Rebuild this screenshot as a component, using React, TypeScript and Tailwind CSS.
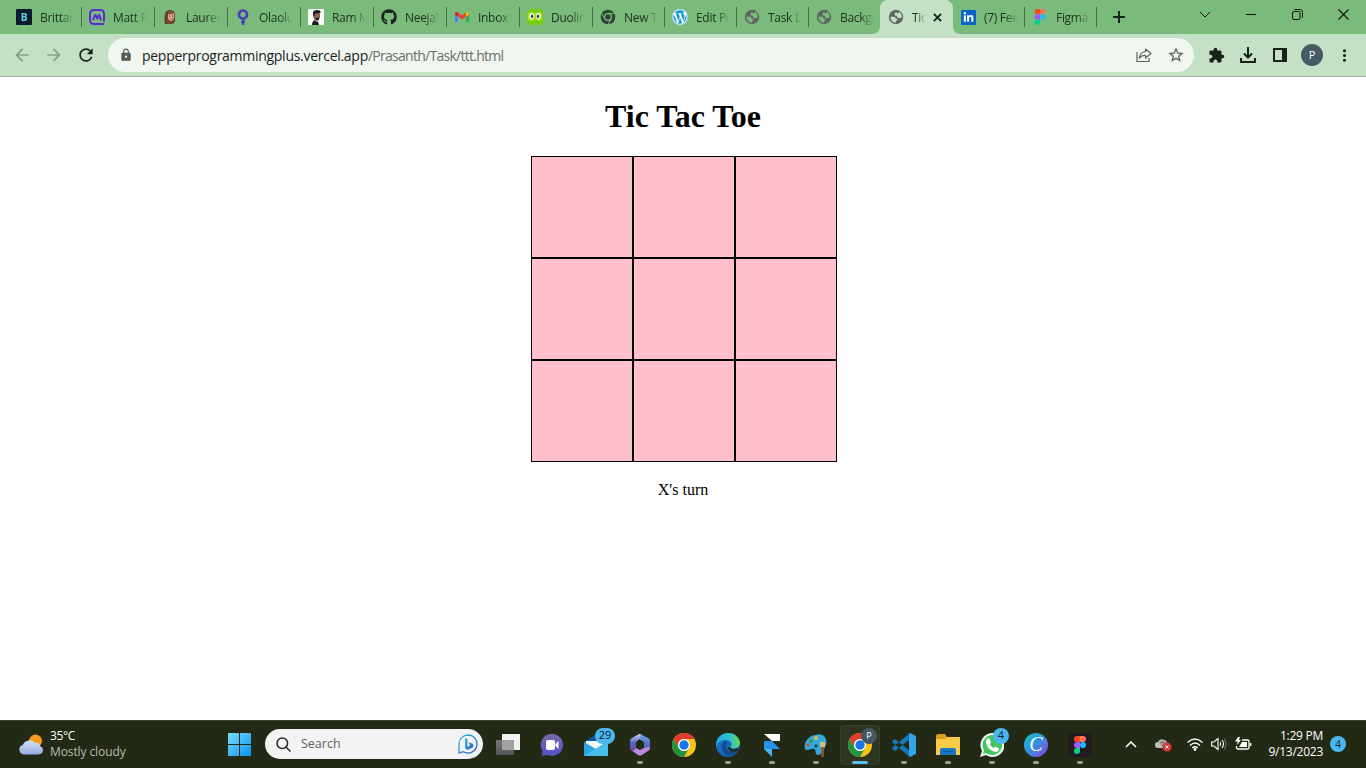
import React from "react";
import { FaGithub, FaWordpress, FaLinkedinIn } from "react-icons/fa";
import { MdExtension, MdLock, MdStarBorder, MdArrowBack, MdArrowForward, MdRefresh, MdMoreVert } from "react-icons/md";

const FigmaMark = ({ className }: { className: string }) => (
  <svg viewBox="0 0 20 30" className={className}>
    <path d="M10 0H5a5 5 0 0 0 0 10h5z" fill="#f24e1e" />
    <path d="M10 0h5a5 5 0 0 1 0 10h-5z" fill="#ff7262" />
    <path d="M10 10H5a5 5 0 0 0 0 10h5z" fill="#a259ff" />
    <circle cx="15" cy="15" r="5" fill="#1abcfe" />
    <path d="M10 20H5a5 5 0 1 0 5 5z" fill="#0acf83" />
  </svg>
);

const ChromeMark = ({ className }: { className: string }) => (
  <svg viewBox="0 0 48 48" className={className}>
    <circle cx="24" cy="24" r="24" fill="#fbc116" />
    <path d="M3.2 12A24 24 0 0 1 44.8 12H24A12 12 0 0 0 13.6 30Z" fill="#e33b2e" />
    <path d="M3.2 12A24 24 0 0 0 24 48L34.4 30A12 12 0 0 1 13.6 30Z" fill="#229342" />
    <circle cx="24" cy="24" r="12" fill="#fff" />
    <circle cx="24" cy="24" r="9.4" fill="#1a73e8" />
  </svg>
);

const Globe = ({ land }: { land: string }) => (
  <svg viewBox="0 0 16 16" className="size-4">
    <circle cx="8" cy="8" r="7.2" fill="#5f6462" />
    <path d="M8.200 3Q6.300 4 6.600 5.700q.4 1.200 2 .9l.7 1.600q1 1.300 2.700.7l1.700-.2Q14 4.500 11 2.700l-.3 1.200-1.500.6z" fill={land} />
    <path d="M2.300 7.800h3.900q1.500.3 1.500 1.900h1.600q.7 1.800-1.200 2.200l-.2 1.800Q3 13.600 2.300 7.800z" fill={land} />
  </svg>
);

type TabData = { title: string; icon: React.ReactNode; active?: boolean; noLine?: boolean; wide?: boolean };

const tabs: TabData[] = [
  {
    title: "Brittany",
    wide: true,
    icon: <span className="flex size-4 items-center justify-center rounded-[1px] bg-[#0b1b2e] text-[10px] font-bold text-[#62d2dc]">B</span>,
  },
  {
    title: "Matt Fa",
    wide: true,
    icon: (
      <svg viewBox="0 0 16 16" className="size-4" fill="none" stroke="#5b28d6" strokeWidth="1.9" strokeLinecap="round">
        <path d="M15 12V4.5Q15 1 11 1H5Q1 1 1 5v6q0 4 4 4h9.500" />
        <path d="M4 10.6C5 10.4 5 6 6.4 6s.5 3.6 1.5 3.6S8.700 6 10 6s.5 4.500 2 4.500" />
      </svg>
    ),
  },
  {
    title: "Lauren",
    wide: true,
    icon: (
      <svg viewBox="0 0 16 16" className="size-4">
        <path d="M3 15C2 9 2 1 8 1c6 0 5 6 5 10 0 3-2 4-4 4z" fill="#633b2c" />
        <ellipse cx="9" cy="7.300" rx="3.200" ry="4.700" fill="#dfa98b" />
        <path d="M4 9v5l4 1 3-2-4-1zM5 5q4 1 7-1L9 2z" fill="#7a4936" />
        <path d="M7 7h1m2 0h1" stroke="#28201f" />
        <path d="M8 10h3" stroke="#b84e48" />
      </svg>
    ),
  },
  {
    title: "Olaolu",
    wide: true,
    icon: (
      <svg viewBox="0 0 16 16" className="size-4" fill="none" stroke="#473ebd">
        <circle cx="8" cy="5.500" r="4" strokeWidth="2.700" />
        <path d="M8 9v7" strokeWidth="2.200" />
        <path d="M6 13h4" strokeWidth="1.800" />
      </svg>
    ),
  },
  {
    title: "Ram Mah",
    wide: true,
    icon: (
      <svg viewBox="0 0 16 16" className="size-4">
        <path fill="#f8f8f8" d="M0 0h16v16H0z" />
        <path d="M5 3q1-2 4-1.500Q12 2 12 5v3q-1 3-3 3l-1 1-2-2-1-3z" fill="#8d5d4d" />
        <path d="M5 6V3q1-2 4-2 4 0 3.500 3L11 4 7 4.500 6.500 7zM4 16q0-4 3-5l1 1.500h2l1 3.500zM7.500 9l4-.5-1 3H8.500z" fill="#1c1d25" />
      </svg>
    ),
  },
  { title: "NeejaVa", wide: true, icon: <FaGithub className="size-4 text-[#1b2420]" /> },
  {
    title: "Inbox (",
    wide: true,
    icon: (
      <svg viewBox="0 0 16 16" className="size-4">
        <path d="M1 4v9h3V7z" fill="#4285f4" />
        <path d="M12 7v6h3V4z" fill="#34a853" />
        <path d="M4 3.500v4L8 10.500l4-3v-4L8 6.500z" fill="#ea4335" />
        <path d="M1 4.500Q1 2 4 3.500v4L1 5.500z" fill="#c5221f" />
        <path d="M15 4.500Q15 2 12 3.500v4l3-2z" fill="#fbbc04" />
      </svg>
    ),
  },
  {
    title: "Duoling",
    wide: true,
    icon: (
      <svg viewBox="0 0 16 16" className="size-4">
        <rect width="16" height="16" rx="3.500" fill="#75cc13" />
        <path d="M1 6q0-3 3.500-3L8 4.500 11.500 3Q15 3 15 6v3q0 3-3.500 3L8 10l-3.500 2Q1 12 1 9z" fill="#a4e829" />
        <ellipse cx="4.700" cy="7.300" rx="2.300" ry="3" fill="#fff" />
        <ellipse cx="11.300" cy="7.300" rx="2.300" ry="3" fill="#fff" />
        <ellipse cx="5" cy="7.300" rx="1.300" ry="1.900" fill="#43464d" />
        <ellipse cx="11" cy="7.300" rx="1.300" ry="1.900" fill="#43464d" />
        <path d="M6.500 9h3L8 11.500z" fill="#f9aa24" />
      </svg>
    ),
  },
  {
    title: "New Ta",
    icon: (
      <svg viewBox="0 0 48 48" className="size-4">
        <circle cx="24" cy="24" r="22" fill="#2d4535" />
        <path d="M24 13h20M14.500 29.500 4.500 12M33.500 29.500 23.500 47" stroke="#7aba7b" strokeWidth="3" />
        <circle cx="24" cy="24" r="10" fill="#2d4535" stroke="#7aba7b" strokeWidth="4" />
      </svg>
    ),
  },
  {
    title: "Edit Po",
    icon: (
      <span className="flex size-4 items-center justify-center rounded-full bg-white">
        <FaWordpress className="size-4 text-[#159bd5]" />
      </span>
    ),
  },
  { title: "Task Li", icon: <Globe land="#7aba7b" /> },
  { title: "Backgr", icon: <Globe land="#7aba7b" />, noLine: true },
  { title: "Tic", icon: <Globe land="#c4e0c5" />, active: true, noLine: true },
  {
    title: "(7) Fee",
    icon: (
      <span className="flex size-[15px] items-center justify-center rounded-[1px] bg-[#0a66c2]">
        <FaLinkedinIn className="size-[11px] text-white" />
      </span>
    ),
  },
  { title: "Figma", icon: <FigmaMark className="h-4 w-4" /> },
];

function Tab({ tab }: { tab: TabData }) {
  return (
    <div
      className={
        "relative flex h-[34px] shrink-0 items-center pl-2 " +
        (tab.wide ? "w-[73px] " : "w-[72px] ") +
        (tab.active ? "rounded-t-lg bg-[#c4e0c5] shadow-[1px_0_0_#c4e0c5]" : "")
      }
    >
      <span className="flex size-4 shrink-0 items-center justify-center">{tab.icon}</span>
      <span
        className={
          "ml-2 overflow-hidden pt-px text-[12px] leading-4 tracking-[-0.3px] whitespace-nowrap text-[#1d3020] " +
          (tab.active
            ? "w-[14px] [mask-image:linear-gradient(to_right,black_30%,transparent)]"
            : "w-[34px] [mask-image:linear-gradient(to_right,black_60%,transparent)]")
        }
      >
        {tab.title}
      </span>
      {tab.active && (
        <>
          <svg viewBox="0 0 10 10" className="ml-[7px] size-[9px] shrink-0" stroke="#142017" strokeWidth="2">
            <path d="M1 1l8 8M9 1L1 9" />
          </svg>
          <svg viewBox="0 0 8 8" className="absolute bottom-0 -left-2 size-2"><path d="M8 0v8H0q8 0 8-8" fill="#c4e0c5" /></svg>
          <svg viewBox="0 0 8 8" className="absolute -right-[9px] bottom-0 size-2"><path d="M0 0v8h8Q0 8 0 0" fill="#c4e0c5" /></svg>
        </>
      )}
      {!tab.noLine && <span className="absolute top-[7px] -right-px h-5 w-px bg-[#466f49]" />}
    </div>
  );
}

function TabStrip() {
  return (
    <div className="flex h-[34px] bg-[#7aba7b] pl-2">
      {tabs.map((t) => <Tab key={t.title} tab={t} />)}
      <div className="flex w-[46px] items-center justify-center">
        <svg viewBox="0 0 12 12" className="size-3" stroke="#17251a" strokeWidth="2"><path d="M6 0v12M0 6h12" /></svg>
      </div>
      <div className="ml-auto flex h-[28px] items-center">
        <div className="flex w-[46px] justify-center">
          <svg viewBox="0 0 12 7" className="h-[7px] w-3" fill="none" stroke="#111"><path d="M1 1l5 5 5-5" /></svg>
        </div>
        <div className="flex w-[46px] justify-center"><span className="h-px w-[10px] bg-[#111]" /></div>
        <div className="flex w-[46px] justify-center">
          <svg viewBox="0 0 11 11" className="size-[11px]" fill="none" stroke="#111">
            <rect x=".5" y="2.500" width="7.500" height="8" rx="1.500" />
            <path d="M2.500 .5h5q3 0 3 3v5" />
          </svg>
        </div>
        <div className="flex w-[46px] justify-center">
          <svg viewBox="0 0 11 11" className="size-[11px]" stroke="#111" strokeWidth="1.100"><path d="M.5 .5l10 10M10.500 .5l-10 10" /></svg>
        </div>
      </div>
    </div>
  );
}

function Toolbar() {
  return (
    <div className="flex h-[43px] items-center border-b border-[#a5b5a6] bg-[#c4e0c5] text-[#18211a]">
      <div className="flex w-[108px] items-center gap-3 pl-3">
        <MdArrowBack className="size-5 text-[#84a086]" />
        <MdArrowForward className="size-5 text-[#84a086]" />
        <MdRefresh className="size-5" />
      </div>
      <div className="flex h-[34px] w-[1086px] items-center rounded-full bg-[#f0f7f0] pl-[11px]">
        <MdLock className="size-[14px] text-[#535b55]" />
        <span className="ml-[9px] w-[362px] pt-px text-[14px] leading-5 tracking-[-0.28px] whitespace-nowrap text-[#1b241d]">
          pepperprogrammingplus.vercel.app<span className="tracking-[-0.73px] text-[#68716a]">/Prasanth/Task/ttt.html</span>
        </span>
        <svg viewBox="0 0 16 16" className="ml-auto size-4" fill="none" stroke="#59625b" strokeWidth="1.200">
          <path d="M1 5v9.500h12V11" />
          <path d="M9.500 2l5.500 4.500L9.500 11V8.500Q6 8 3.500 11 4 5 9.500 4.500z" strokeLinejoin="round" />
        </svg>
        <MdStarBorder className="mr-[9px] ml-[15px] size-[18px] text-[#4f5851]" />
      </div>
      <div className="flex items-center pl-[14px]">
        <MdExtension className="size-[17px]" />
        <svg viewBox="0 0 16 16" className="ml-[15px] size-4" fill="none" stroke="currentColor" strokeWidth="2">
          <path d="M8 0v10M4 6.500l4 4 4-4M1 11v4h14v-4" />
        </svg>
        <svg viewBox="0 0 14 14" className="ml-[17px] size-[14px]">
          <path d="M1 1h12v12H1z" fill="none" stroke="currentColor" strokeWidth="2" />
          <path d="M9 1h4v12H9z" fill="currentColor" />
        </svg>
        <span className="ml-[14px] flex size-[22px] items-center justify-center rounded-full bg-[#455a64] text-[11px] text-white">P</span>
        <MdMoreVert className="ml-3 size-[19px]" />
      </div>
    </div>
  );
}

function Board() {
  return (
    <main className="flex flex-1 flex-col items-center bg-white font-['Liberation_Serif',serif] text-black">
      <h1 className="mt-[21px] text-[32px] leading-[37px] font-bold">Tic Tac Toe</h1>
      <div className="mt-[21px] ml-[2px] grid w-[306px] grid-cols-3">
        {Array.from({ length: 9 }, (_, i) => (
          <button key={i} className="size-[102px] border border-black bg-[#ffc0cb]" />
        ))}
      </div>
      <p className="mt-[19px] text-[16px] leading-[18px]">X's turn</p>
    </main>
  );
}

type TaskbarApp = { name: string; icon: React.ReactNode; running?: boolean; active?: boolean };

const apps: TaskbarApp[] = [
  {
    name: "tasks",
    icon: (
      <svg viewBox="0 0 24 24" className="size-6">
        <defs><linearGradient id="tv" x2="0" y2="1"><stop stopColor="#777" /><stop offset="1" stopColor="#555" /></linearGradient></defs>
        <path d="M6 1h18v16H6z" fill="#f2f2f2" />
        <path d="M0 7h18v15H0z" fill="url(#tv)" />
        <path d="M6 7h12v10H6z" fill="#a2a2a2" />
      </svg>
    ),
  },
  {
    name: "chat",
    icon: (
      <svg viewBox="0 0 24 24" className="size-6">
        <defs><linearGradient id="ch" x2="0" y2="1"><stop stopColor="#7b67a9" /><stop offset="1" stopColor="#5153c9" /></linearGradient></defs>
        <path d="M12.500 1a11 11 0 1 1-5 21L1.500 23l1-5A11 11 0 0 1 12.500 1" fill="url(#ch)" />
        <rect x="6" y="7" width="9" height="10" rx="2" fill="#fff" />
        <path d="M15.500 11l3-3v8l-3-3z" fill="#fff" />
      </svg>
    ),
  },
  {
    name: "mail",
    icon: (
      <span className="relative flex">
        <svg viewBox="0 0 24 24" className="size-6">
          <path d="M0 9l12-8 12 8v14H0z" fill="#0b5797" />
          <path d="M2 8h20v9H2z" fill="#f4f8fa" />
          <path d="M0 9l12 7L24 8v15H0z" fill="#2ba4df" />
          <path d="M0 23l24-15v15z" fill="#48bde9" />
        </svg>
        <span className="absolute -top-[5px] left-[11px] flex h-4 w-5 items-center justify-center rounded-full bg-[#4cb7ef] text-[11px] text-[#10202b]">29</span>
      </span>
    ),
  },
  {
    name: "office",
    running: true,
    icon: (
      <svg viewBox="0 0 24 24" className="size-6">
        <defs>
          <linearGradient id="m1" x2="0" y2="1"><stop stopColor="#c3d2ef" /><stop offset=".5" stopColor="#5664bd" /><stop offset="1" stopColor="#7441a0" /></linearGradient>
          <linearGradient id="m2" x2="0" y2="1"><stop stopColor="#69a9e8" /><stop offset="1" stopColor="#4e48a4" /></linearGradient>
        </defs>
        <path d="M13 1Q15 2 14 4L8 9v6l-1 4-3-1q-2-1-2-3V8q0-2 2-3l7-4z" fill="url(#m1)" />
        <path d="M12 1l8 4q2 1 2 3v7l-2 3-4-3V9l-5-3q2-2 1-5z" fill="url(#m2)" />
        <path d="M3 17q3 2 5-2l4 2 4-2q6-2 6 0 0 2-2 3l-6 4q-2 1-4 0z" fill="#bd87df" />
      </svg>
    ),
  },
  { name: "chrome", icon: <ChromeMark className="size-6" /> },
  {
    name: "edge",
    running: true,
    icon: (
      <svg viewBox="0 0 24 24" className="size-6">
        <defs>
          <linearGradient id="e1"><stop stopColor="#1eabe5" /><stop offset=".55" stopColor="#30bdd0" /><stop offset="1" stopColor="#67d957" /></linearGradient>
          <linearGradient id="e2" x2="1" y2="1"><stop stopColor="#1c79d5" /><stop offset="1" stopColor="#0e59ad" /></linearGradient>
        </defs>
        <circle cx="12" cy="12" r="12" fill="url(#e2)" />
        <path d="M0 11C1 4 6 0 12 0c7 0 12 5 12 10 0 4-4 6-8 5-2 0-2-1-1-2 2-3-1-6-5-6C5 7 1 9 0 14z" fill="url(#e1)" />
        <path d="M9 8C5 10 5 18 10 22c5 2 9-.5 12-4-6 2-12 0-12-5 0-2 1-3 2-4z" fill="#154b87" />
        <path d="M14 14c1 3 5 3 9 1l-1 3c-5 2-10 0-10-4z" fill="#222914" />
      </svg>
    ),
  },
  {
    name: "framer",
    running: true,
    icon: (
      <svg viewBox="0 0 24 24" className="size-6">
        <path d="M4 1h16v7h-8z" fill="#fff" />
        <path d="M4 8h8l8 8H4z" fill="#2692e8" />
        <path d="M4 16h8v8z" fill="#44b8f7" />
      </svg>
    ),
  },
  {
    name: "paint",
    running: true,
    icon: (
      <svg viewBox="0 0 24 24" className="size-6">
        <path d="M11 2C20-1 25 7 21 14c-2 5-4 8-7 8-4-1-1-5-4-6-4-1-7 3-9 0C-1 9 5 3 11 2" fill="#31a9df" />
        <circle cx="7" cy="8" r="2" fill="#3d9c4d" /><circle cx="12" cy="5" r="2" fill="#e7b63f" />
        <circle cx="4" cy="12" r="1.700" fill="#d84e3f" /><circle cx="12" cy="13" r="1.700" fill="#18465b" />
        <path d="M16 9h5v5h-5z" fill="#dfba79" /><path d="M17 14h3l-.3 10h-2z" fill="#9a582e" />
      </svg>
    ),
  },
  {
    name: "chrome-profile",
    active: true,
    icon: (
      <span className="relative flex">
        <ChromeMark className="size-6" />
        <span className="absolute -top-[5px] left-[13px] flex size-4 items-center justify-center rounded-full bg-[#455763] text-[9px] text-white">P</span>
      </span>
    ),
  },
  {
    name: "code",
    running: true,
    icon: (
      <svg viewBox="0 0 24 24" className="size-6">
        <path d="M0 8l3-2 15 12v6L1 10zM0 16l3 2L18 6V0L1 14z" fill="#1678b9" />
        <path d="M18 0l6 3v18l-6 3-1-1V1z" fill="#34a2ed" />
      </svg>
    ),
  },
  {
    name: "files",
    running: true,
    icon: (
      <svg viewBox="0 0 24 24" className="size-6">
        <path d="M0 3q0-2 2-2h7l2 3h11q2 0 2 2v2H0z" fill="#d99c20" />
        <path d="M0 6h9l2-2h13v18H0z" fill="#fbcb48" />
        <path d="M4 22v-5q0-2 2-2h12q2 0 2 2v5z" fill="#1878c4" />
        <path d="M7 18h10v1H7z" fill="#0e5698" />
      </svg>
    ),
  },
  {
    name: "whatsapp",
    running: true,
    icon: (
      <span className="relative flex">
        <svg viewBox="0 0 24 24" className="size-6">
          <path d="M12 0a12 12 0 1 1-6 22L0 24l2-6A12 12 0 0 1 12 0" fill="#f4faf4" />
          <path d="M12 2a10 10 0 1 1-6 18l-3 1 1-4A10 10 0 0 1 12 2" fill="#43c65b" />
          <path d="M7 6l2-1 2 4-1 2q1 3 4 4l1.500-1.500 3.500 2q0 3-3 3.500Q8 18 6 10q-.5-3 1-4" fill="#fff" />
        </svg>
        <span className="absolute -top-[5px] left-[13px] flex size-4 items-center justify-center rounded-full bg-[#4cb7ef] text-[11px] text-[#10202b]">4</span>
      </span>
    ),
  },
  {
    name: "canva",
    running: true,
    icon: (
      <span className="flex size-6 items-center justify-center rounded-full bg-linear-to-br from-[#0bc5cc] via-[#318cdc] to-[#7d2ae8] pb-px font-['Liberation_Serif',serif] text-[20px] leading-none text-white italic">C</span>
    ),
  },
  {
    name: "figma",
    running: true,
    icon: <span className="flex size-6 items-center justify-center rounded-[4px] bg-[#211c21]"><FigmaMark className="h-[18px] w-3" /></span>,
  },
];

function Taskbar() {
  return (
    <footer className="flex h-12 items-center border-t border-[#383e2b] bg-[#222914] text-white">
      <div className="flex w-[218px] items-center pl-[18px]">
        <svg viewBox="0 0 26 22" className="h-[22px] w-[26px]">
          <defs><linearGradient id="cl" x2="0" y2="1"><stop stopColor="#d4dffa" /><stop offset="1" stopColor="#94aee2" /></linearGradient></defs>
          <circle cx="17.500" cy="7" r="6.500" fill="#f69b20" />
          <path d="M6 20.500a5 5 0 0 1-1-9.800A7 7 0 0 1 17 9q4-1 5 3 3 1 3 4 0 4-5 4.500z" fill="url(#cl)" />
        </svg>
        <div className="ml-[6px] pb-0.5 text-[12px] leading-4 tracking-[-0.1px]">
          <div className="tracking-[-0.4px]">35°C</div>
          <div className="whitespace-nowrap text-[#b9bcb2]">Mostly cloudy</div>
        </div>
      </div>
      <div className="flex w-[47px] pl-[10px]">
        <svg viewBox="0 0 23 23" className="size-[23px]">
          <defs><linearGradient id="win" x2="1" y2="1"><stop stopColor="#7adcfc" /><stop offset="1" stopColor="#0a91ee" /></linearGradient></defs>
          <path d="M0 0h11v11H0zM12 0h11v11H12zM0 12h11v11H0zM12 12h11v11H12z" fill="url(#win)" />
        </svg>
      </div>
      <div className="-mt-px flex h-[30px] w-[218px] items-center rounded-full bg-[#f2f3f2] pr-[5px] pl-[11px]">
        <svg viewBox="0 0 15 15" className="size-[15px]" fill="none" stroke="#24272b" strokeWidth="1.500"><circle cx="6.300" cy="6.300" r="5.300" /><path d="M10 10l4.500 4.500" /></svg>
        <span className="ml-[10px] text-[12.5px] text-[#5f6260]">Search</span>
        <svg viewBox="0 0 20 20" className="ml-auto size-5">
          <defs><linearGradient id="bi" x2="1" y2="1"><stop stopColor="#38bbdf" /><stop offset="1" stopColor="#2556c4" /></linearGradient></defs>
          <path d="M10 1a9 9 0 1 1-4.500 16.800L1 19V10a9 9 0 0 1 9-9" fill="none" stroke="url(#bi)" strokeWidth="1.300" />
          <path d="M7 4l2.500 1v8l2.500-1.500-1.500-3.500 4.500 2q1 2-.5 3.500L9.500 16 7 14z" fill="url(#bi)" />
        </svg>
      </div>
      <div className="ml-[3px] flex">
        {apps.map((a) => (
          <div key={a.name} className="flex h-[46px] w-11 items-center justify-center">
            <div className={"relative flex size-10 items-center justify-center rounded-[4px] " + (a.active ? "bg-[#2e3521] ring-1 ring-[#3a402d] ring-inset" : "")}>
              {a.icon}
              {a.running && <span className="absolute bottom-px h-[3px] w-1.5 rounded-full bg-[#9b9f94]" />}
              {a.active && <span className="absolute bottom-px h-[3px] w-4 rounded-full bg-[#5bbdf0]" />}
            </div>
          </div>
        ))}
      </div>
      <div className="-mt-px flex flex-1 items-center pl-[23px]">
        <svg viewBox="0 0 12 7" className="h-[7px] w-3" fill="none" stroke="#fff" strokeWidth="1.500"><path d="M1 6l5-5 5 5" /></svg>
        <svg viewBox="0 0 17 15" className="ml-[18px] h-[15px] w-[17px]">
          <path d="M3 11Q0 11 0 8q0-3 3-3 2-4 6-2 3 0 3 4v4z" fill="#c2c2bc" /><path d="M4 5q5-4 8 2v4H8z" fill="#8b8d86" />
          <circle cx="12" cy="10" r="4.500" fill="#d6363c" /><path d="M10.500 8.500l3 3m0-3l-3 3" stroke="#fff" />
        </svg>
        <svg viewBox="0 0 16 13" className="ml-[15px] h-[13px] w-4" fill="none" stroke="#fff" strokeWidth="1.300">
          <path d="M.5 4.500q7.500-7 15 0M3 7.500q5-5 10 0M5.300 10q2.700-2.500 5.400 0" /><circle cx="8" cy="11.500" r=".8" fill="#fff" />
        </svg>
        <svg viewBox="0 0 16 14" className="ml-2 h-[14px] w-4" fill="none" stroke="#fff" strokeWidth="1.100">
          <path d="M.6 5v4H3l4 3.500v-11L3 5zM9 5q1.500 2 0 4M11 3q3 4 0 8" /><path d="M13 1.500q4 5.500 0 11" stroke="#6c7264" />
        </svg>
        <svg viewBox="0 0 17 14" className="ml-2 h-[14px] w-[17px]">
          <path d="M7 3h5.500q1.500 0 1.500 1.500v6q0 1.500-1.500 1.500H3q-1.500 0-1.500-1.500V9M15.700 6v3" fill="none" stroke="#fff" strokeWidth="1.300" />
          <path d="M7 5h5v5H4zM3 0h2L4 3h2L2 8l.7-3.500H0z" fill="#fff" />
        </svg>
        <div className="ml-auto pb-px text-right text-[12px] leading-4 tracking-[-0.25px]">
          <div>1:29 PM</div>
          <div>9/13/2023</div>
        </div>
        <span className="mr-5 ml-[7px] flex size-4 items-center justify-center rounded-full bg-[#4cb7ef] text-[10px] text-[#10202b]">4</span>
      </div>
    </footer>
  );
}

export default function App() {
  return (
    <div className="flex h-screen w-full flex-col overflow-hidden font-['Open_Sans','Noto_Sans',sans-serif]">
      <TabStrip />
      <Toolbar />
      <Board />
      <Taskbar />
    </div>
  );
}
